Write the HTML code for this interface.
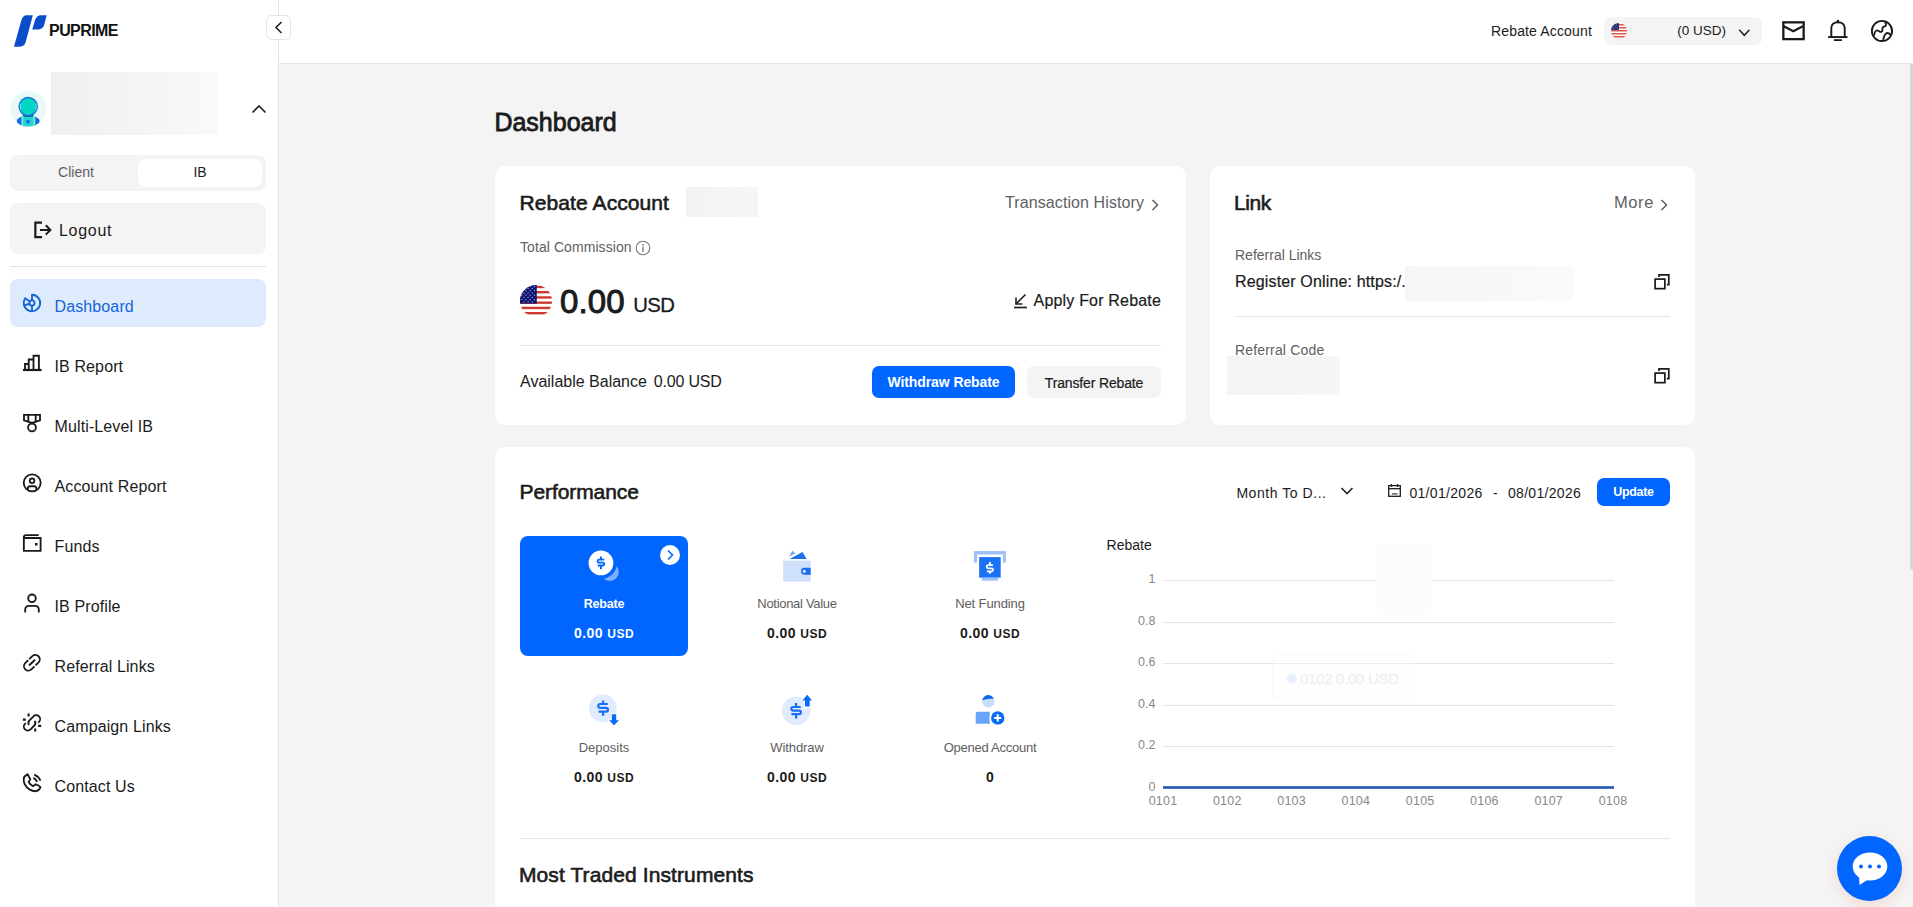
<!DOCTYPE html>
<html><head><meta charset="utf-8"><title>Dashboard</title>
<style>
html,body{margin:0;padding:0;width:1913px;height:907px;overflow:hidden;background:#f4f4f4;}
body{position:relative;font-family:"Liberation Sans",sans-serif;}
.t{position:absolute;white-space:pre;}
svg{display:block;}
</style></head><body>
<div style="position:absolute;left:0px;top:0px;width:1913px;height:907px;background:#f4f4f4"></div>
<div style="position:absolute;left:279px;top:0px;width:1634px;height:63px;background:#fff"></div>
<div style="position:absolute;left:279px;top:63px;width:1634px;height:1px;background:#e6e6e6"></div>
<div style="position:absolute;left:0px;top:0px;width:278px;height:907px;background:#fff"></div>
<div style="position:absolute;left:278px;top:0px;width:1px;height:907px;background:#e6e6e6"></div>
<div style="position:absolute;left:1910px;top:64px;width:4px;height:506px;background:#d6d6d6;border-radius:0 0 0 3px"></div>
<svg style="position:absolute;left:13px;top:15px;" width="35" height="33" viewBox="0 0 35 33"><path d="M19.83 0.14 L12.9 26.3 C12.2 29.5 10 31.76 6.6 31.76 H0.98 L8.3 5.4 C9.2 2.2 11 0.14 13.75 0.14 Z" fill="#0a4cc9"/><path d="M33.65 0.14 L31.35 9.15 C30.5 12.5 28 14.6 24.2 14.6 H19.2 L21.3 7.5 C22.2 3.5 24.3 0.14 27.6 0.14 Z" fill="#0a4cc9"/></svg>
<div class="t" style="left:49.1px;top:22.86px;font-size:16px;line-height:16px;font-weight:700;color:#111;letter-spacing:-0.6px;">PUPRIME</div>
<div style="position:absolute;left:266px;top:15px;width:25px;height:25px;background:#fff;border:1px solid #e3e3e3;border-radius:6px;box-sizing:border-box"></div>
<svg style="position:absolute;left:274px;top:21px;" width="10" height="13" viewBox="0 0 10 13"><path d="M7.5 1 L2 6.5 L7.5 12" fill="none" stroke="#222" stroke-width="1.6"/></svg>
<svg style="position:absolute;left:10px;top:91px;overflow:visible" width="37" height="37" viewBox="0 0 37 37"><defs><clipPath id="cav"><circle cx="18.2" cy="17.9" r="18"/></clipPath></defs><circle cx="18.2" cy="17.9" r="18" fill="#e9f9fa"/><g clip-path="url(#cav)"><ellipse cx="18.2" cy="30" rx="11.5" ry="5.3" fill="#1a66e8"/><rect x="11.4" y="24.75" width="13.9" height="10.5" fill="#6ae9de"/><rect x="13.3" y="25.3" width="10" height="10" fill="#22d8c8"/><circle cx="18.07" cy="30.7" r="1.9" fill="#1a66f0"/></g><ellipse cx="18.2" cy="24.3" rx="5.5" ry="1.6" fill="#0b3d8f"/><circle cx="18.2" cy="15.6" r="9.8" fill="#1a6ee0"/><circle cx="18.2" cy="15.6" r="8.4" fill="#00d6c2"/><path d="M10.6 12.5 Q9.8 15.6 10.6 18.7 M25.8 12.5 Q26.6 15.6 25.8 18.7" fill="none" stroke="#7fe3ef" stroke-width="0.9"/></svg>
<div style="position:absolute;left:51px;top:72px;width:167px;height:63px;background:linear-gradient(90deg,#eef0f1,#f4f5f5 60%,#f9f9f9)"></div>
<svg style="position:absolute;left:251px;top:104px;" width="16" height="10" viewBox="0 0 16 10"><path d="M1.5 8.5 L8 2 L14.5 8.5" fill="none" stroke="#222" stroke-width="1.7"/></svg>
<div style="position:absolute;left:10px;top:155px;width:256px;height:36px;background:#f4f4f4;border-radius:8px"></div>
<div style="position:absolute;left:138px;top:159px;width:124px;height:28px;background:#fff;border-radius:7px"></div>
<div class="t" style="left:-224px;width:600px;text-align:center;top:165.45px;font-size:14px;line-height:14px;font-weight:400;color:#606060;">Client</div>
<div class="t" style="left:-100px;width:600px;text-align:center;top:165.45px;font-size:14px;line-height:14px;font-weight:400;color:#222;">IB</div>
<div style="position:absolute;left:10px;top:203px;width:256px;height:51px;background:#f4f4f4;border-radius:8px"></div>
<svg style="position:absolute;left:33px;top:220px;" width="20" height="20" viewBox="0 0 20 20"><path d="M9 2.6 H2.36 V17.1 H9" fill="none" stroke="#1a1a1a" stroke-width="2.2"/><path d="M7 9.95 H17.3 M12.8 5.3 L17.4 9.95 L12.8 14.6" fill="none" stroke="#1a1a1a" stroke-width="2.0"/></svg>
<div class="t" style="left:59px;top:222.86px;font-size:16px;line-height:16px;font-weight:400;color:#1b1b1b;letter-spacing:0.7px;">Logout</div>
<div style="position:absolute;left:10px;top:266px;width:256px;height:1px;background:#e3e3e3"></div>
<div style="position:absolute;left:10px;top:279px;width:256px;height:48px;background:#deebfd;border-radius:8px"></div>
<div class="t" style="left:54.5px;top:298.76px;font-size:16px;line-height:16px;font-weight:400;color:#1565dc;letter-spacing:0.12px;">Dashboard</div>
<div class="t" style="left:54.5px;top:358.76px;font-size:16px;line-height:16px;font-weight:400;color:#1b1b1b;letter-spacing:0.12px;">IB Report</div>
<div class="t" style="left:54.5px;top:418.76px;font-size:16px;line-height:16px;font-weight:400;color:#1b1b1b;letter-spacing:0.12px;">Multi-Level IB</div>
<div class="t" style="left:54.5px;top:478.76px;font-size:16px;line-height:16px;font-weight:400;color:#1b1b1b;letter-spacing:0.12px;">Account Report</div>
<div class="t" style="left:54.5px;top:538.76px;font-size:16px;line-height:16px;font-weight:400;color:#1b1b1b;letter-spacing:0.12px;">Funds</div>
<div class="t" style="left:54.5px;top:598.76px;font-size:16px;line-height:16px;font-weight:400;color:#1b1b1b;letter-spacing:0.12px;">IB Profile</div>
<div class="t" style="left:54.5px;top:658.76px;font-size:16px;line-height:16px;font-weight:400;color:#1b1b1b;letter-spacing:0.12px;">Referral Links</div>
<div class="t" style="left:54.5px;top:718.76px;font-size:16px;line-height:16px;font-weight:400;color:#1b1b1b;letter-spacing:0.12px;">Campaign Links</div>
<div class="t" style="left:54.5px;top:778.76px;font-size:16px;line-height:16px;font-weight:400;color:#1b1b1b;letter-spacing:0.12px;">Contact Us</div>
<svg style="position:absolute;left:22px;top:292px;overflow:visible" width="22" height="22" viewBox="0 0 22 22"><path d="M10 2.8 A8.2 8.2 0 1 1 3.28 6.29 L7.87 9.51" fill="none" stroke="#1565dc" stroke-width="1.9"/><path d="M10 1.9 V8.4 M10 13.6 V19.2 M7.51 11.75 L2.14 13.35" fill="none" stroke="#1565dc" stroke-width="1.9"/><circle cx="10" cy="11" r="2.6" fill="none" stroke="#1565dc" stroke-width="1.9"/></svg>
<svg style="position:absolute;left:22px;top:352px;overflow:visible" width="22" height="22" viewBox="0 0 22 22"><path d="M1 18 H19.6" fill="none" stroke="#1a1a1a" stroke-width="2.2"/><path d="M3 18 V12 H6.7 V18 M6.7 12 V7.5 H11.5 V18 M11.5 7.5 V3.7 H16.9 V18" fill="none" stroke="#1a1a1a" stroke-width="1.85"/></svg>
<svg style="position:absolute;left:22px;top:412px;overflow:visible" width="22" height="22" viewBox="0 0 22 22"><path d="M2 2.8 H18 V8.3 L10 11 L2 8.3 Z" fill="none" stroke="#1a1a1a" stroke-width="1.85"/><path d="M6.3 2.8 V9.5 M13.7 2.8 V9.5" fill="none" stroke="#1a1a1a" stroke-width="1.85"/><circle cx="10" cy="15.5" r="3.9" fill="none" stroke="#1a1a1a" stroke-width="1.85"/></svg>
<svg style="position:absolute;left:22px;top:472px;overflow:visible" width="22" height="22" viewBox="0 0 22 22"><circle cx="10.2" cy="10.8" r="8.5" fill="none" stroke="#1a1a1a" stroke-width="1.85"/><circle cx="10.1" cy="8.8" r="2.3" fill="none" stroke="#1a1a1a" stroke-width="1.85"/><path d="M5.9 17.8 V16 Q5.9 14.2 8 14.2 H12.2 Q14.3 14.2 14.3 16 V17.8" fill="none" stroke="#1a1a1a" stroke-width="1.85"/></svg>
<svg style="position:absolute;left:22px;top:532px;overflow:visible" width="22" height="22" viewBox="0 0 22 22"><path d="M1.85 6 H18.6 V18.9 H1.85 Z" fill="none" stroke="#1a1a1a" stroke-width="1.85"/><path d="M1.85 6.5 V5.5 Q1.85 3.1 4.2 3.1 H16.7" fill="none" stroke="#1a1a1a" stroke-width="1.85"/><rect x="13" y="11" width="2.5" height="2.5" fill="#1a1a1a"/></svg>
<svg style="position:absolute;left:22px;top:592px;overflow:visible" width="22" height="22" viewBox="0 0 22 22"><circle cx="10" cy="6.3" r="3.8" fill="none" stroke="#1a1a1a" stroke-width="1.85"/><path d="M3.2 20.6 V17.8 C3.2 15.2 4.6 13.8 7.2 13.8 H12.8 C15.4 13.8 16.8 15.2 16.8 17.8 V20.6" fill="none" stroke="#1a1a1a" stroke-width="1.85"/></svg>
<svg style="position:absolute;left:22px;top:652px;overflow:visible" width="22" height="22" viewBox="0 0 22 22"><path d="M7.27 7.19 L10.34 4.19 A4.4 4.4 0 0 1 16.56 10.41 L13.49 13.41" fill="none" stroke="#1a1a1a" stroke-width="1.85"/><path d="M12.49 14.41 L9.42 17.41 A4.4 4.4 0 0 1 3.2 11.19 L6.27 8.19" fill="none" stroke="#1a1a1a" stroke-width="1.85"/><path d="M7.0 13.5 L13.1 7.6" fill="none" stroke="#1a1a1a" stroke-width="2"/></svg>
<svg style="position:absolute;left:22px;top:712px;overflow:visible" width="22" height="22" viewBox="0 0 22 22"><path d="M7.2 12.9 C6 11.5 6.3 9.5 7.5 8.3 L11.5 4.3 C13 2.8 15.5 2.8 17 4.3 C18.5 5.8 18.5 8.3 17 9.8 L16.2 10.6" fill="none" stroke="#1a1a1a" stroke-width="1.85"/><path d="M12.5 8.9 C13.7 10.3 13.6 12.2 12.4 13.5 L8.5 17.4 C7 18.9 4.5 18.9 3 17.4 C1.5 15.9 1.5 13.4 3 11.9 L3.8 11.1" fill="none" stroke="#1a1a1a" stroke-width="1.85"/><path d="M6.6 1.4 V4.4 M0.9 7.6 H3.8 M16.1 13.9 H19.2 M13.2 16.4 V19.5" fill="none" stroke="#1a1a1a" stroke-width="2.1"/></svg>
<svg style="position:absolute;left:22px;top:772px;overflow:visible" width="22" height="22" viewBox="0 0 22 22"><path d="M5.6 2.3 C4 3 2.2 4 1.8 6 C1.5 8 1.6 10 2.6 12 C3.8 14.5 5.5 16.3 7.8 17.6 C9.8 18.8 11.8 19.3 13.6 19.2 C15.5 19 17.5 18 18.5 15.2 C17.6 13.8 16.2 13 13.8 12.3 L11 14.2 C9 13.2 7.6 11.8 6.7 10 L8.3 7.2 Z" fill="none" stroke="#1a1a1a" stroke-width="1.85"/><path d="M11.3 5.9 C13.2 6.8 14.4 8 15.2 9.9 M12.2 2.6 C15.2 3.8 17.3 5.8 18.5 8.6" fill="none" stroke="#1a1a1a" stroke-width="1.85"/></svg>
<div class="t" style="left:1491px;top:23.85px;font-size:14px;line-height:14px;font-weight:400;color:#1b1b1b;letter-spacing:0.15px;">Rebate Account</div>
<div style="position:absolute;left:1604px;top:17px;width:158px;height:28px;background:#f4f4f4;border-radius:7px"></div>
<svg style="position:absolute;left:1611px;top:23px;" width="16" height="16" viewBox="0 0 16 16"><defs><clipPath id="ch"><circle cx="8.0" cy="8.0" r="8.0"/></clipPath></defs><g clip-path="url(#ch)"><rect width="16" height="16" fill="#fff"/><rect x="0" y="1.00" width="16" height="1.5" fill="#e0554a"/><rect x="0" y="4.00" width="16" height="1.5" fill="#e0554a"/><rect x="0" y="7.00" width="16" height="1.5" fill="#e0554a"/><rect x="0" y="10.00" width="16" height="1.5" fill="#e0554a"/><rect x="0" y="13.00" width="16" height="1.5" fill="#e0554a"/><rect x="0" y="0" width="8" height="7" fill="#27337a"/><circle cx="2.5" cy="2" r="0.45" fill="#9aa0d8"/><circle cx="5.5" cy="2" r="0.45" fill="#9aa0d8"/><circle cx="4" cy="4" r="0.45" fill="#9aa0d8"/><circle cx="2.5" cy="5.5" r="0.45" fill="#9aa0d8"/><circle cx="6.5" cy="5.5" r="0.45" fill="#9aa0d8"/></g></svg>
<div class="t" style="left:1126px;width:600px;text-align:right;top:23.77px;font-size:13.5px;line-height:13.5px;font-weight:400;color:#1b1b1b;">(0 USD)</div>
<svg style="position:absolute;left:1738px;top:28px;" width="14" height="9" viewBox="0 0 14 9"><path d="M1.2 1.8 L6.3 7.3 L11.4 1.8" fill="none" stroke="#222" stroke-width="1.5"/></svg>
<svg style="position:absolute;left:1781px;top:20px;" width="25" height="22" viewBox="0 0 25 22"><rect x="2.34" y="2.34" width="20.3" height="16.8" fill="none" stroke="#1a1a1a" stroke-width="2.3"/><path d="M2.8 6.3 L12.3 11.3 L21.8 6.3" fill="none" stroke="#1a1a1a" stroke-width="2.1"/></svg>
<svg style="position:absolute;left:1826px;top:18px;overflow:visible" width="24" height="24" viewBox="0 0 24 24"><path d="M5.3 19 V10 C5.3 6.5 8 4.2 12 4.2 C16 4.2 18.7 6.5 18.7 10 V19" fill="none" stroke="#1a1a1a" stroke-width="1.9"/><path d="M2.1 19.05 H21.5" stroke="#1a1a1a" stroke-width="1.9"/><path d="M7.9 22.1 H15.9" stroke="#1a1a1a" stroke-width="1.8"/><circle cx="11.9" cy="2.9" r="1.2" fill="#1a1a1a"/></svg>
<svg style="position:absolute;left:1870px;top:19px;" width="24" height="24" viewBox="0 0 24 24"><circle cx="11.97" cy="11.96" r="10.1" fill="none" stroke="#1a1a1a" stroke-width="1.9"/><path d="M4.1 16.5 C4.5 14 5 12 6.5 11.5 C8.2 11 9.5 13 11 12.9 C12.8 12.8 12.4 10.5 12.4 9.5 C12.4 8 13.5 7.5 14.8 7.3 C16.5 7 16.2 5.5 15.4 4.2 L15.6 2.8" fill="none" stroke="#1a1a1a" stroke-width="1.8"/><path d="M13.3 21.8 C13.3 20 13.5 18.5 14.3 17 C15 15.2 16 14.2 17.3 14 C18.8 13.8 19.8 14.8 20.8 16.3" fill="none" stroke="#1a1a1a" stroke-width="1.8"/></svg>
<div class="t" style="left:494.4px;top:110.24px;font-size:25px;line-height:25px;font-weight:400;color:#1b1b1b;-webkit-text-stroke:0.8px #1b1b1b;">Dashboard</div>
<div style="position:absolute;left:495px;top:166px;width:691px;height:259px;background:#fff;border-radius:10px"></div>
<div class="t" style="left:519.6px;top:192.02px;font-size:21px;line-height:21px;font-weight:400;color:#1b1b1b;letter-spacing:0.08px;-webkit-text-stroke:0.6px #1b1b1b;">Rebate Account</div>
<div style="position:absolute;left:686px;top:187px;width:72px;height:30px;background:linear-gradient(90deg,#f3f3f3,#f6f6f6)"></div>
<div class="t" style="left:544px;width:600px;text-align:right;top:194.66px;font-size:16px;line-height:16px;font-weight:400;color:#5f6166;letter-spacing:0.09px;">Transaction History</div>
<svg style="position:absolute;left:1149.5px;top:197.8px;" width="10" height="14" viewBox="0 0 10 14"><path d="M2.5 2 L7.5 7 L2.5 12" fill="none" stroke="#606060" stroke-width="1.5"/></svg>
<div class="t" style="left:520px;top:240.05px;font-size:14px;line-height:14px;font-weight:400;color:#606060;letter-spacing:0.07px;">Total Commission</div>
<svg style="position:absolute;left:635px;top:240px;" width="16" height="16" viewBox="0 0 16 16"><circle cx="8" cy="8" r="6.8" fill="none" stroke="#777" stroke-width="1.1"/><rect x="7.3" y="6.6" width="1.4" height="5.4" fill="#808080"/><rect x="7.2" y="4.1" width="1.7" height="1.6" fill="#808080"/></svg>
<svg style="position:absolute;left:520px;top:285px;" width="32" height="32" viewBox="0 0 32 32"><defs><clipPath id="cbig"><circle cx="16.0" cy="16.0" r="16.0"/></clipPath></defs><g clip-path="url(#cbig)"><rect width="32" height="32" fill="#fff"/><rect x="0" y="0.74" width="32" height="2.4" fill="#cf3b30"/><rect x="0" y="5.99" width="32" height="2.4" fill="#cf3b30"/><rect x="0" y="11.24" width="32" height="2.4" fill="#cf3b30"/><rect x="0" y="16.49" width="32" height="2.4" fill="#cf3b30"/><rect x="0" y="21.74" width="32" height="2.4" fill="#cf3b30"/><rect x="0" y="26.99" width="32" height="2.4" fill="#cf3b30"/><rect x="0" y="0" width="16.76" height="18.6" fill="#0c1670"/><circle cx="1.80" cy="1.20" r="0.62" fill="#b4b8f0"/><circle cx="6.00" cy="1.20" r="0.62" fill="#b4b8f0"/><circle cx="10.20" cy="1.20" r="0.62" fill="#b4b8f0"/><circle cx="14.40" cy="1.20" r="0.62" fill="#b4b8f0"/><circle cx="3.90" cy="3.45" r="0.62" fill="#b4b8f0"/><circle cx="8.10" cy="3.45" r="0.62" fill="#b4b8f0"/><circle cx="12.30" cy="3.45" r="0.62" fill="#b4b8f0"/><circle cx="1.80" cy="5.70" r="0.62" fill="#b4b8f0"/><circle cx="6.00" cy="5.70" r="0.62" fill="#b4b8f0"/><circle cx="10.20" cy="5.70" r="0.62" fill="#b4b8f0"/><circle cx="14.40" cy="5.70" r="0.62" fill="#b4b8f0"/><circle cx="3.90" cy="7.95" r="0.62" fill="#b4b8f0"/><circle cx="8.10" cy="7.95" r="0.62" fill="#b4b8f0"/><circle cx="12.30" cy="7.95" r="0.62" fill="#b4b8f0"/><circle cx="1.80" cy="10.20" r="0.62" fill="#b4b8f0"/><circle cx="6.00" cy="10.20" r="0.62" fill="#b4b8f0"/><circle cx="10.20" cy="10.20" r="0.62" fill="#b4b8f0"/><circle cx="14.40" cy="10.20" r="0.62" fill="#b4b8f0"/><circle cx="3.90" cy="12.45" r="0.62" fill="#b4b8f0"/><circle cx="8.10" cy="12.45" r="0.62" fill="#b4b8f0"/><circle cx="12.30" cy="12.45" r="0.62" fill="#b4b8f0"/><circle cx="1.80" cy="14.70" r="0.62" fill="#b4b8f0"/><circle cx="6.00" cy="14.70" r="0.62" fill="#b4b8f0"/><circle cx="10.20" cy="14.70" r="0.62" fill="#b4b8f0"/><circle cx="14.40" cy="14.70" r="0.62" fill="#b4b8f0"/><circle cx="3.90" cy="16.95" r="0.62" fill="#b4b8f0"/><circle cx="8.10" cy="16.95" r="0.62" fill="#b4b8f0"/><circle cx="12.30" cy="16.95" r="0.62" fill="#b4b8f0"/></g></svg>
<div class="t" style="left:560px;top:284.97px;font-size:33px;line-height:33px;font-weight:400;color:#1b1b1b;letter-spacing:0.1px;-webkit-text-stroke:1.0px #1b1b1b;">0.00</div>
<div class="t" style="left:633.2px;top:294.72px;font-size:20.3px;line-height:20.3px;font-weight:400;color:#1b1b1b;letter-spacing:-0.6px;-webkit-text-stroke:0.3px #1b1b1b;">USD</div>
<svg style="position:absolute;left:1013px;top:292px;" width="16" height="17" viewBox="0 0 16 17"><path d="M12.5 2.5 L3 12" fill="none" stroke="#222" stroke-width="1.6"/><path d="M3 5.5 V12 H9.5" fill="none" stroke="#222" stroke-width="1.6"/><path d="M1 15.5 H14" stroke="#222" stroke-width="1.7"/></svg>
<div class="t" style="left:561px;width:600px;text-align:right;top:292.66px;font-size:16px;line-height:16px;font-weight:400;color:#1b1b1b;letter-spacing:0.18px;-webkit-text-stroke:0.2px #1b1b1b;">Apply For Rebate</div>
<div style="position:absolute;left:520px;top:345px;width:641px;height:1px;background:#e5e5e5"></div>
<div class="t" style="left:520px;top:374.26px;font-size:16px;line-height:16px;font-weight:400;color:#1b1b1b;">Available Balance</div>
<div class="t" style="left:653.8px;top:374.26px;font-size:16px;line-height:16px;font-weight:400;color:#1b1b1b;letter-spacing:-0.2px;">0.00 USD</div>
<div style="position:absolute;left:872px;top:366px;width:143px;height:32px;background:#0066ff;border-radius:7px"></div>
<div class="t" style="left:643.5px;width:600px;text-align:center;top:375.25px;font-size:14px;line-height:14px;font-weight:700;color:#fff;letter-spacing:-0.1px;">Withdraw Rebate</div>
<div style="position:absolute;left:1027px;top:366px;width:134px;height:32px;background:#f4f4f4;border-radius:7px"></div>
<div class="t" style="left:794px;width:600px;text-align:center;top:375.75px;font-size:14px;line-height:14px;font-weight:400;color:#1b1b1b;letter-spacing:-0.15px;-webkit-text-stroke:0.2px #1b1b1b;">Transfer Rebate</div>
<div style="position:absolute;left:1210px;top:166px;width:485px;height:259px;background:#fff;border-radius:10px"></div>
<div class="t" style="left:1234px;top:192.42px;font-size:21px;line-height:21px;font-weight:400;color:#1b1b1b;letter-spacing:-0.4px;-webkit-text-stroke:0.6px #1b1b1b;">Link</div>
<div class="t" style="left:1054px;width:600px;text-align:right;top:194.23px;font-size:16.5px;line-height:16.5px;font-weight:400;color:#5f6166;letter-spacing:0.6px;">More</div>
<svg style="position:absolute;left:1658.5px;top:197.8px;" width="10" height="14" viewBox="0 0 10 14"><path d="M2.5 2 L7.5 7 L2.5 12" fill="none" stroke="#606060" stroke-width="1.5"/></svg>
<div class="t" style="left:1235px;top:248.15px;font-size:14px;line-height:14px;font-weight:400;color:#606060;">Referral Links</div>
<div class="t" style="left:1235px;top:274.36px;font-size:16px;line-height:16px;font-weight:400;color:#1b1b1b;letter-spacing:0.15px;-webkit-text-stroke:0.2px #1b1b1b;">Register Online: https:/.</div>
<div style="position:absolute;left:1405px;top:266px;width:168px;height:35px;background:linear-gradient(90deg,#f6f6f6,#f8f8f8 60%,#fafafa)"></div>
<svg style="position:absolute;left:1653px;top:273px;" width="18" height="18" viewBox="0 0 18 18"><path d="M6.0 3.9 V1.95 H15.8 V11.65 H13.85" fill="none" stroke="#1a1a1a" stroke-width="1.7"/><rect x="2.1" y="6.1" width="9.75" height="9.55" fill="none" stroke="#1a1a1a" stroke-width="1.7"/></svg>
<div style="position:absolute;left:1235px;top:316px;width:435px;height:1px;background:#e5e5e5"></div>
<div class="t" style="left:1235px;top:343.15px;font-size:14px;line-height:14px;font-weight:400;color:#606060;letter-spacing:0.17px;">Referral Code</div>
<div style="position:absolute;left:1227px;top:356px;width:113px;height:39px;background:linear-gradient(90deg,#f4f4f4,#f6f6f6)"></div>
<svg style="position:absolute;left:1653px;top:367px;" width="18" height="18" viewBox="0 0 18 18"><path d="M6.0 3.9 V1.95 H15.8 V11.65 H13.85" fill="none" stroke="#1a1a1a" stroke-width="1.7"/><rect x="2.1" y="6.1" width="9.75" height="9.55" fill="none" stroke="#1a1a1a" stroke-width="1.7"/></svg>
<div style="position:absolute;left:495px;top:447px;width:1200px;height:480px;background:#fff;border-radius:10px"></div>
<div class="t" style="left:519.6px;top:481.12px;font-size:21px;line-height:21px;font-weight:400;color:#1b1b1b;letter-spacing:-0.1px;-webkit-text-stroke:0.6px #1b1b1b;">Performance</div>
<div class="t" style="left:1236.4px;top:486.35px;font-size:14px;line-height:14px;font-weight:400;color:#1b1b1b;letter-spacing:0.55px;">Month To D...</div>
<svg style="position:absolute;left:1340px;top:486px;" width="14" height="10" viewBox="0 0 14 10"><path d="M1.5 2 L7 7.5 L12.5 2" fill="none" stroke="#222" stroke-width="1.6"/></svg>
<svg style="position:absolute;left:1387px;top:484px;overflow:visible" width="15" height="14" viewBox="0 0 15 14"><rect x="1.7" y="1.65" width="11.6" height="10.65" fill="none" stroke="#1e1a24" stroke-width="1.3"/><path d="M1.7 4.7 H13.3" stroke="#1e1a24" stroke-width="1.3"/><path d="M4.4 0 V2.8 M10.5 0 V2.8" stroke="#1e1a24" stroke-width="1.3"/><path d="M4.8 9.9 H10.5" stroke="#555" stroke-width="1.4"/></svg>
<div class="t" style="left:1409.4px;top:486.35px;font-size:14px;line-height:14px;font-weight:400;color:#1b1b1b;letter-spacing:0.32px;">01/01/2026</div>
<div class="t" style="left:1493px;top:486.35px;font-size:14px;line-height:14px;font-weight:400;color:#1b1b1b;">-</div>
<div class="t" style="left:1508px;top:486.35px;font-size:14px;line-height:14px;font-weight:400;color:#1b1b1b;letter-spacing:0.3px;">08/01/2026</div>
<div style="position:absolute;left:1597px;top:478px;width:73px;height:28px;background:#0066ff;border-radius:7px"></div>
<div class="t" style="left:1333.5px;width:600px;text-align:center;top:485.92px;font-size:12.5px;line-height:12.5px;font-weight:700;color:#fff;letter-spacing:-0.3px;">Update</div>
<div style="position:absolute;left:520px;top:536px;width:168px;height:120px;background:#0066ff;border-radius:8px"></div>
<svg style="position:absolute;left:660px;top:545px;" width="20" height="20" viewBox="0 0 20 20"><circle cx="10" cy="10" r="10" fill="#fff"/><path d="M8 5.5 L12.5 10 L8 14.5" fill="none" stroke="#0066ff" stroke-width="1.6"/></svg>
<svg style="position:absolute;left:588px;top:550px;" width="34" height="34" viewBox="0 0 34 34"><defs><mask id="mcres"><rect width="34" height="34" fill="#fff"/><circle cx="12.95" cy="12.9" r="16" fill="#000"/></mask></defs><circle cx="21.85" cy="22.0" r="9.0" fill="#7cb0ff" mask="url(#mcres)"/><circle cx="12.95" cy="12.9" r="12.4" fill="#fff"/><path d="M16.25 9.65 H10.92 A1.48 1.48 0 0 0 10.92 12.60 H14.97 A1.48 1.48 0 0 1 14.97 15.55 H9.65 M12.95 6.50 V9.65 M12.95 15.55 V19.20" fill="none" stroke="#0066ff" stroke-width="1.9"/></svg>
<div class="t" style="left:304px;width:600px;text-align:center;top:597.92px;font-size:12.5px;line-height:12.5px;font-weight:700;color:#fff;letter-spacing:-0.2px;">Rebate</div>
<div class="t" style="left:304px;width:600px;text-align:center;top:626.45px;font-size:14px;line-height:14px;font-weight:700;color:#fff;letter-spacing:0.45px;">0.00 <span style="font-size:12px">USD</span></div>
<div class="t" style="left:497px;width:600px;text-align:center;top:597.30px;font-size:13px;line-height:13px;font-weight:400;color:#5e5e5e;letter-spacing:-0.3px;">Notional Value</div>
<div class="t" style="left:497px;width:600px;text-align:center;top:626.15px;font-size:14px;line-height:14px;font-weight:700;color:#1b1b1b;letter-spacing:0.45px;">0.00 <span style="font-size:12px">USD</span></div>
<div class="t" style="left:690px;width:600px;text-align:center;top:597.30px;font-size:13px;line-height:13px;font-weight:400;color:#5e5e5e;letter-spacing:-0.1px;">Net Funding</div>
<div class="t" style="left:690px;width:600px;text-align:center;top:626.15px;font-size:14px;line-height:14px;font-weight:700;color:#1b1b1b;letter-spacing:0.45px;">0.00 <span style="font-size:12px">USD</span></div>
<div class="t" style="left:304px;width:600px;text-align:center;top:740.70px;font-size:13px;line-height:13px;font-weight:400;color:#5e5e5e;">Deposits</div>
<div class="t" style="left:304px;width:600px;text-align:center;top:769.65px;font-size:14px;line-height:14px;font-weight:700;color:#1b1b1b;letter-spacing:0.45px;">0.00 <span style="font-size:12px">USD</span></div>
<div class="t" style="left:497px;width:600px;text-align:center;top:740.70px;font-size:13px;line-height:13px;font-weight:400;color:#5e5e5e;letter-spacing:-0.1px;">Withdraw</div>
<div class="t" style="left:497px;width:600px;text-align:center;top:769.65px;font-size:14px;line-height:14px;font-weight:700;color:#1b1b1b;letter-spacing:0.45px;">0.00 <span style="font-size:12px">USD</span></div>
<div class="t" style="left:690px;width:600px;text-align:center;top:740.70px;font-size:13px;line-height:13px;font-weight:400;color:#5e5e5e;letter-spacing:-0.25px;">Opened Account</div>
<div class="t" style="left:690px;width:600px;text-align:center;top:769.65px;font-size:14px;line-height:14px;font-weight:700;color:#1b1b1b;letter-spacing:0.45px;">0</div>
<svg style="position:absolute;left:782px;top:550px;" width="30" height="32" viewBox="0 0 30 32"><path d="M7.6 8.9 L20.5 1.9 L24.7 8.9 Z" fill="#1f6ff0"/><path d="M6.9 6.6 L10.4 0.7 L13.3 3.2 Z" fill="#6fa2f7"/><rect x="1.18" y="10.6" width="27.5" height="21.1" fill="#cfe0fb"/><path d="M28.7 17.8 H22.5 A3.47 3.47 0 0 0 22.5 24.75 H28.7 Z" fill="#1a6ff0"/><circle cx="22.3" cy="21.3" r="1.6" fill="#dbe9fd"/></svg>
<svg style="position:absolute;left:973px;top:550px;" width="34" height="32" viewBox="0 0 34 32"><path d="M0.94 0.94 H32.9 V12.6 H29.9 V4.4 H3.94 V12.6 H0.94 Z" fill="#9dc0f8"/><rect x="6.15" y="7.1" width="21.55" height="20.6" fill="#1a73f5"/><rect x="8.9" y="27.7" width="16.1" height="3" fill="#9dc0f8"/><path d="M19.90 15.20 H15.25 A1.55 1.55 0 0 0 15.25 18.30 H18.55 A1.55 1.55 0 0 1 18.55 21.40 H13.90 M16.90 12.10 V15.20 M16.90 21.40 V23.75" fill="none" stroke="#fff" stroke-width="1.8"/></svg>
<svg style="position:absolute;left:588px;top:694px;" width="34" height="34" viewBox="0 0 34 34"><circle cx="14.8" cy="14.3" r="13.9" fill="#e0ecfd"/><path d="M19.75 10.00 H12.18 A1.92 1.92 0 0 0 12.18 13.85 H18.02 A1.92 1.92 0 0 1 18.02 17.70 H10.45 M15.10 6.40 V10.00 M15.10 17.70 V21.80" fill="none" stroke="#1a6ff5" stroke-width="2.2"/><path d="M23.8 20.3 H28.2 V26.2 H31 L26 31.2 L21 26.2 H23.8 Z" fill="#0a6cf5" stroke="#fff" stroke-width="1.4" paint-order="stroke"/></svg>
<svg style="position:absolute;left:781px;top:693px;" width="34" height="34" viewBox="0 0 34 34"><circle cx="15.2" cy="17.85" r="14.3" fill="#e0ecfd"/><path d="M22.8 0 H33 V14.8 H22.8 Z" fill="#fff"/><path d="M19.75 14.00 H12.05 A1.80 1.80 0 0 0 12.05 17.60 H18.15 A1.80 1.80 0 0 1 18.15 21.20 H10.45 M15.10 10.10 V14.00 M15.10 21.20 V25.50" fill="none" stroke="#1a6ff5" stroke-width="2.2"/><path d="M24 13.6 H28.7 V7.4 H31 L26.2 1.7 L21.3 7.4 H24 Z" fill="#0a6cf5" stroke="#fff" stroke-width="1.4" paint-order="stroke"/></svg>
<svg style="position:absolute;left:974px;top:694px;" width="32" height="33" viewBox="0 0 32 33"><defs><clipPath id="chead"><circle cx="14.3" cy="7.3" r="6.2"/></clipPath><mask id="mbody"><rect width="32" height="33" fill="#fff"/><circle cx="23.75" cy="23.9" r="8.3" fill="#000"/></mask></defs><g clip-path="url(#chead)"><rect x="0" y="0" width="32" height="20" fill="#c9dcfb"/><path d="M7 0 H22 V4.6 Q14 4.2 7 6.6 Z" fill="#1366ef"/></g><path d="M1.7 29.7 V19.8 Q1.7 17.8 3.7 17.8 H15.8 V29.7 Z" fill="#6aa4f8" mask="url(#mbody)"/><circle cx="23.75" cy="23.9" r="6.7" fill="#0a6cf5"/><path d="M23.75 20.3 V27.5 M20.15 23.9 H27.35" stroke="#fff" stroke-width="2"/></svg>
<div class="t" style="left:1106.6px;top:538.25px;font-size:14px;line-height:14px;font-weight:400;color:#1b1b1b;">Rebate</div>
<div style="position:absolute;left:1163px;top:580px;width:451px;height:1px;background:#e3e3e3"></div>
<div class="t" style="left:555.5px;width:600px;text-align:right;top:573.42px;font-size:12.5px;line-height:12.5px;font-weight:400;color:#888;">1</div>
<div style="position:absolute;left:1163px;top:622px;width:451px;height:1px;background:#e3e3e3"></div>
<div class="t" style="left:555.5px;width:600px;text-align:right;top:614.92px;font-size:12.5px;line-height:12.5px;font-weight:400;color:#888;">0.8</div>
<div style="position:absolute;left:1163px;top:663px;width:451px;height:1px;background:#e3e3e3"></div>
<div class="t" style="left:555.5px;width:600px;text-align:right;top:656.42px;font-size:12.5px;line-height:12.5px;font-weight:400;color:#888;">0.6</div>
<div style="position:absolute;left:1163px;top:705px;width:451px;height:1px;background:#e3e3e3"></div>
<div class="t" style="left:555.5px;width:600px;text-align:right;top:697.92px;font-size:12.5px;line-height:12.5px;font-weight:400;color:#888;">0.4</div>
<div style="position:absolute;left:1163px;top:746px;width:451px;height:1px;background:#e3e3e3"></div>
<div class="t" style="left:555.5px;width:600px;text-align:right;top:739.42px;font-size:12.5px;line-height:12.5px;font-weight:400;color:#888;">0.2</div>
<div style="position:absolute;left:1163px;top:788px;width:451px;height:1px;background:#e3e3e3"></div>
<div class="t" style="left:555.5px;width:600px;text-align:right;top:780.92px;font-size:12.5px;line-height:12.5px;font-weight:400;color:#888;">0</div>
<div style="position:absolute;left:1163px;top:786px;width:451px;height:3px;background:linear-gradient(#6f92d0,#2457b3 35%,#2457b3 75%,#9fb6e0)"></div>
<div class="t" style="left:863.0px;width:600px;text-align:center;top:795.42px;font-size:12.5px;line-height:12.5px;font-weight:400;color:#888;letter-spacing:0.2px;">0101</div>
<div class="t" style="left:927.2857142857142px;width:600px;text-align:center;top:795.42px;font-size:12.5px;line-height:12.5px;font-weight:400;color:#888;letter-spacing:0.2px;">0102</div>
<div class="t" style="left:991.5714285714287px;width:600px;text-align:center;top:795.42px;font-size:12.5px;line-height:12.5px;font-weight:400;color:#888;letter-spacing:0.2px;">0103</div>
<div class="t" style="left:1055.857142857143px;width:600px;text-align:center;top:795.42px;font-size:12.5px;line-height:12.5px;font-weight:400;color:#888;letter-spacing:0.2px;">0104</div>
<div class="t" style="left:1120.142857142857px;width:600px;text-align:center;top:795.42px;font-size:12.5px;line-height:12.5px;font-weight:400;color:#888;letter-spacing:0.2px;">0105</div>
<div class="t" style="left:1184.4285714285716px;width:600px;text-align:center;top:795.42px;font-size:12.5px;line-height:12.5px;font-weight:400;color:#888;letter-spacing:0.2px;">0106</div>
<div class="t" style="left:1248.7142857142858px;width:600px;text-align:center;top:795.42px;font-size:12.5px;line-height:12.5px;font-weight:400;color:#888;letter-spacing:0.2px;">0107</div>
<div class="t" style="left:1313.0px;width:600px;text-align:center;top:795.42px;font-size:12.5px;line-height:12.5px;font-weight:400;color:#888;letter-spacing:0.2px;">0108</div>
<div style="position:absolute;left:1377px;top:544px;width:54px;height:71px;background:#fcfcfc"></div>
<div style="position:absolute;left:1272px;top:654px;width:143px;height:46px;background:rgba(252,252,252,0.35);border:1px solid rgba(0,0,0,0.018);border-radius:6px;box-sizing:border-box"></div>
<svg style="position:absolute;left:1286px;top:673px;" width="12" height="12" viewBox="0 0 12 12"><circle cx="5.7" cy="5.8" r="5" fill="#e8f0fd"/></svg>
<div class="t" style="left:1300px;top:670.90px;font-size:15px;line-height:15px;font-weight:400;color:#edf0f4;letter-spacing:-0.3px;-webkit-text-stroke:0.3px #edf0f4;">0102 0.00 USD</div>
<div style="position:absolute;left:520px;top:838px;width:1150px;height:1px;background:#e5e5e5"></div>
<div class="t" style="left:519px;top:864.12px;font-size:21px;line-height:21px;font-weight:400;color:#1b1b1b;letter-spacing:0.1px;-webkit-text-stroke:0.6px #1b1b1b;">Most Traded Instruments</div>
<div style="position:absolute;left:1837px;top:836px;width:65px;height:65px;background:#0066ff;border-radius:50%;box-shadow:0 4px 14px rgba(230,120,90,0.22)"></div>
<svg style="position:absolute;left:1852px;top:852px;" width="36" height="34" viewBox="0 0 36 34"><ellipse cx="18" cy="14.5" rx="17.3" ry="14" fill="#fff"/><path d="M7 23 L7.5 33 L17 27 Z" fill="#fff"/><circle cx="9" cy="14.5" r="2" fill="#0066ff"/><circle cx="18" cy="14.5" r="2" fill="#0066ff"/><circle cx="27" cy="14.5" r="2" fill="#0066ff"/></svg>
</body></html>
